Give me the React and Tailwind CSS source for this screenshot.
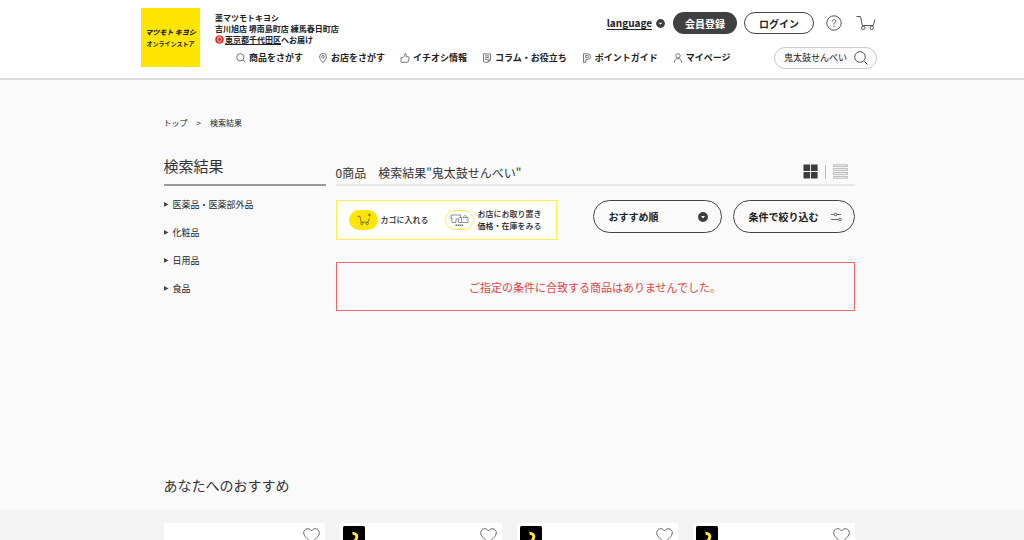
import React from "react";

const navItems = [
  { label: "商品をさがす", icon: "search" },
  { label: "お店をさがす", icon: "pin" },
  { label: "イチオシ情報", icon: "thumb" },
  { label: "コラム・お役立ち", icon: "note" },
  { label: "ポイントガイド", icon: "point" },
  { label: "マイページ", icon: "user" },
];

const categories = ["医薬品・医薬部外品", "化粧品", "日用品", "食品"];

const recommendations = [
  { id: 1, badge: false },
  { id: 2, badge: true },
  { id: 3, badge: true },
  { id: 4, badge: true },
];

const navShapes = {
  search: (
    <>
      <circle cx="4.3" cy="4.3" r="3.6" />
      <path d="M7 7l2.4 2.4" />
    </>
  ),
  pin: (
    <>
      <path d="M5 9.6C3.2 7.3 1.6 5.6 1.6 3.8a3.4 3.4 0 0 1 6.8 0C8.4 5.6 6.8 7.3 5 9.6z" />
      <circle cx="5" cy="3.8" r="1.3" />
    </>
  ),
  thumb: (
    <path d="M1 4.600h1.900L4.700 2.400 4.900.7c1.300-.2 1.700.9 1.100 3.100h2.300c.8 0 .9.700.7 1.400L8.200 8.400c-.2.600-.6.900-1.200.9H1.800c-.5 0-.8-.3-.8-.8z" />
  ),
  note: (
    <>
      <path d="M1.500.9h7v5.900L6.200 9.200H2.600c-.7 0-1.100-.4-1.100-1.100z" />
      <path d="M3 2.900h4M3 4.700h4M3 6.500h2.400M6.200 9.200V6.800h2.300" />
    </>
  ),
  point: (
    <>
      <path d="M1.500 9.300V.8h4.300a2.700 2.700 0 0 1 0 5.500H3.800v3z" />
      <path d="M3.700 2.500h2a1 1 0 0 1 0 2h-2z" />
    </>
  ),
  user: (
    <>
      <circle cx="5" cy="2.900" r="2.200" />
      <path d="M1.400 9.600c0-2.600 1.400-4.100 3.600-4.100s3.600 1.500 3.600 4.100" />
    </>
  ),
};

function NavIcon({ name }) {
  return (
    <svg viewBox="0 0 10 10" className="size-[10px] shrink-0" fill="none" stroke="#555" strokeWidth="0.8" aria-hidden="true">
      {navShapes[name]}
    </svg>
  );
}

function CartIcon({ className, plus = false }) {
  return (
    <svg viewBox="0 0 20 16" className={className} fill="none" stroke="currentColor" strokeWidth="1" aria-hidden="true">
      <path d="M.5 1.500h4l1.800 9h11L18.900 4.500" />
      <circle cx="7.300" cy="12.800" r="1.700" />
      <circle cx="15.800" cy="12.800" r="1.700" />
      {plus && <path d="M19-3v5M16.500-.5h5" />}
    </svg>
  );
}

function DownDot({ className }) {
  return (
    <svg viewBox="0 0 10 10" className={className} aria-hidden="true">
      <circle cx="5" cy="5" r="4.900" fill="#3c3c3c" />
      <path d="M3 4.100h4L5 6.500z" fill="#fff" />
    </svg>
  );
}

function Header() {
  return (
    <header className="border-b-2 border-[#dcdcdc] bg-white pr-[6px]">
      <div className="mx-auto flex max-w-[736px] items-start pt-2 pb-[9px]">
        <a href="#top" className="flex size-[59px] shrink-0 flex-col items-center justify-center gap-[3px] bg-[#ffe600] font-black text-[#222]">
          <span className="text-[7px] leading-[9px] whitespace-nowrap italic">マツモト キヨシ</span>
          <span className="text-[6px] leading-[8px] font-bold whitespace-nowrap">オンラインストア</span>
        </a>
        <div className="ml-[15px] flex min-w-0 flex-1 flex-col">
          <div className="flex h-[39px] items-start justify-between">
            <div className="pt-[4px] text-[8px] leading-[11px] font-bold whitespace-nowrap">
              <p>薬マツモトキヨシ</p>
              <p>吉川旭店 堺南島町店 練馬春日町店</p>
              <p className="flex items-center">
                <svg viewBox="0 0 9 9" className="mr-px size-[9px]" aria-hidden="true">
                  <circle cx="4.500" cy="4.500" r="4.300" fill="#d7322d" />
                  <path d="M4.500 7.400C3.200 5.900 2.500 5 2.500 3.900a2 2 0 0 1 4 0c0 1.100-.7 2-2 3.500z" fill="none" stroke="#fff" strokeWidth=".8" />
                </svg>
                <a href="#area" className="underline">東京都千代田区</a>へお届け
              </p>
            </div>
            <div className="flex items-center pt-[4px] font-bold">
              <button type="button" className="mr-2 flex items-center gap-1 text-[10px] leading-4">
                <span className="underline underline-offset-2">language</span>
                <DownDot className="size-[9px]" />
              </button>
              <a href="#register" className="mr-[7px] flex h-[22px] w-16 items-center justify-center rounded-full bg-[#404040] text-[10px] text-white">会員登録</a>
              <a href="#login" className="mr-3 flex h-[22px] w-[70px] items-center justify-center rounded-full border border-[#444] text-[10px]">ログイン</a>
              <a href="#help" aria-label="ヘルプ" className="mr-[14px]">
                <svg viewBox="0 0 16 16" className="size-4" fill="none" stroke="#555" aria-hidden="true">
                  <circle cx="8" cy="8" r="7.200" />
                  <path d="M6.300 6.500c0-2.500 3.500-2.500 3.500-.3C9.800 7.600 8 7.600 8 9.600M8 10.800v1.200" />
                </svg>
              </a>
              <a href="#cart" aria-label="カート" className="mr-px">
                <CartIcon className="h-4 w-5 text-[#555]" />
              </a>
            </div>
          </div>
          <div className="flex h-[22px] items-center justify-between pl-[21px]">
            <nav className="flex gap-[15px]">
              {navItems.map((item) => (
                <a key={item.label} href="#nav" className="flex items-center gap-[3px] text-[9px] leading-4 font-bold whitespace-nowrap">
                  <NavIcon name={item.icon} />
                  {item.label}
                </a>
              ))}
            </nav>
            <form className="flex h-[22px] w-[103px] items-center rounded-full border border-[#ccc] bg-[#fafafa] pr-2 pl-[9px]" onSubmit={(e) => e.preventDefault()}>
              <input type="text" aria-label="キーワード検索" defaultValue="鬼太鼓せんべい" className="min-w-0 flex-1 bg-transparent text-[9px] leading-4 outline-none" />
              <button type="submit" aria-label="検索">
                <svg viewBox="0 0 14 14" className="size-[14px]" fill="none" stroke="#555" aria-hidden="true">
                  <circle cx="6" cy="6" r="5.300" />
                  <path d="M9.800 9.800l3.700 3.700" />
                </svg>
              </button>
            </form>
          </div>
        </div>
      </div>
    </header>
  );
}

function Sidebar() {
  return (
    <aside className="w-[162px] shrink-0">
      <h1 className="flex h-[35px] items-center border-b-2 border-[#999] pb-[2px] text-[15px] text-[#333]">検索結果</h1>
      <ul className="flex flex-col gap-3 pt-[11px]">
        {categories.map((name) => (
          <li key={name}>
            <a href="#category" className="flex items-center gap-1 text-[9px] leading-4">
              <svg viewBox="0 0 5 7" className="h-[7px] w-[5px]" aria-hidden="true">
                <path d="M0 0l4.600 2.400L0 4.800z" fill="#444" />
              </svg>
              {name}
            </a>
          </li>
        ))}
      </ul>
    </aside>
  );
}

function Legend() {
  return (
    <div className="flex h-10 w-[221px] items-center border border-[#ffee50] bg-white pl-3 text-[8px] leading-3 font-medium whitespace-nowrap">
      <span className="mr-[3px] flex h-5 w-[29px] items-center justify-center rounded-full bg-[#ffe600]">
        <CartIcon plus className="h-[11px] w-[13px] overflow-visible text-[#444]" />
      </span>
      <span>カゴに入れる</span>
      <span className="mr-1 ml-4 flex h-5 w-[29px] items-center justify-center rounded-full border border-[#ffe94a]">
        <svg viewBox="0 0 19 13" className="h-[13px] w-[19px]" fill="none" stroke="#666" strokeWidth=".7" aria-hidden="true">
          <path d="M1 1h9.500v2.500M1 1v3h1v4.500h4V5h2.500v3.500h3M1 4h1" />
          <path d="M8.500 4.500l1-1h2v5H18v-5h-5.500M13.500 3.500c0-2.600 3-2.600 3 0M13 5.500h.6M16.400 5.500h.6" />
          <path d="M5.500 11.300h8" strokeWidth="1.600" strokeDasharray="1.500 .5" />
        </svg>
      </span>
      <span>
        お店にお取り置き
        <br />
        価格・在庫をみる
      </span>
    </div>
  );
}

function Results() {
  return (
    <section className="min-w-0 flex-1">
      <div className="flex h-[35px] items-center justify-between border-b-2 border-[#e8e8e8] pr-[7px]">
        <h2 className="pt-[10px] text-[12px] leading-5 whitespace-nowrap text-[#333]">0商品　検索結果"鬼太鼓せんべい"</h2>
        <div className="flex items-center gap-[7px] pt-2">
          <button type="button" aria-label="グリッド表示">
            <svg viewBox="0 0 15 15" className="size-[15px]" fill="#3c3c3c" aria-hidden="true">
              <path d="M.5.5h6.600v6.600H.5zM8 .5h6.600v6.600H8zM.5 8h6.600v6.600H.5zM8 8h6.600v6.600H8z" />
            </svg>
          </button>
          <span className="h-[14px] w-px bg-[#bbb]" />
          <button type="button" aria-label="リスト表示">
            <svg viewBox="0 0 15 15" className="size-[15px]" fill="none" stroke="#aaa" strokeWidth=".8" aria-hidden="true">
              <path d="M.5.8h14v1.800H.5zM.5 4.600h14v1.800H.5zM.5 8.500h14v1.800H.5zM.5 12.400h14v1.800H.5z" />
            </svg>
          </button>
        </div>
      </div>
      <div className="flex items-start justify-between pt-[14px]">
        <Legend />
        <div className="flex gap-[11px] text-[10px] font-bold">
          <button type="button" className="flex h-[33px] w-[129px] items-center justify-between rounded-full border border-[#444] pr-[13px] pl-[15px]">
            おすすめ順
            <DownDot className="size-[10px]" />
          </button>
          <button type="button" className="flex h-[33px] w-[122px] items-center justify-between rounded-full border border-[#444] pr-3 pl-[15px]">
            条件で絞り込む
            <svg viewBox="0 0 11 10" className="h-[10px] w-[11px]" fill="none" stroke="#555" strokeWidth=".9" aria-hidden="true">
              <path d="M0 2.500h3M6 2.500h4M0 7.500h7.500" />
              <circle cx="4.500" cy="2.500" r="1.300" />
              <circle cx="9" cy="7.500" r="1.300" />
            </svg>
          </button>
        </div>
      </div>
      <p className="mt-[22px] border border-[#e66a6a] pt-4 pb-[15px] text-center text-[11px] leading-4 text-[#e04545]">
        ご指定の条件に合致する商品はありませんでした。
      </p>
    </section>
  );
}

function Card({ badge }) {
  return (
    <li className="flex items-start justify-between bg-white px-[3px] pt-[3px]">
      {badge ? (
        <svg viewBox="0 0 22 22" className="size-[22px]" aria-hidden="true">
          <rect width="22" height="22" rx="1.500" fill="#000" />
          <path d="M9.500 7.500c4-.7 5.500 3 3.500 6-1 1.500-3 2.200-5 1.800" fill="none" stroke="#ffe93b" strokeWidth="3" />
        </svg>
      ) : (
        <span />
      )}
      <button type="button" aria-label="お気に入りに追加" className="pt-[2px] pr-[2px]">
        <svg viewBox="0 0 17 15" className="h-[15px] w-[17px]" fill="none" stroke="#666" aria-hidden="true">
          <path d="M8.500 14.300C4.500 11 .7 8.200.7 4.700.7.400 6.300-.8 8.500 3c2.200-3.800 7.800-2.600 7.800 1.700 0 3.500-3.800 6.300-7.800 9.600z" />
        </svg>
      </button>
    </li>
  );
}

export default function App() {
  return (
    <div lang="ja" className="min-h-screen bg-[#fafafa] font-['Noto_Sans_CJK_JP','Noto_Sans',sans-serif] text-[#222]">
      <Header />
      <main className="pr-[6px]">
        <div className="mx-auto max-w-[691px] pt-[35px]">
          <nav aria-label="パンくず" className="flex gap-[9px] text-[8px] leading-4">
            <a href="#top">トップ</a>
            <span>&gt;</span>
            <span>検索結果</span>
          </nav>
          <div className="flex min-h-[342px] gap-[10px] pt-5">
            <Sidebar />
            <Results />
          </div>
          <h2 className="pt-[2px] pb-[15px] text-[14px] leading-5 text-[#333]">あなたへのおすすめ</h2>
        </div>
      </main>
      <section className="bg-[#f3f3f3] pt-[13px] pr-[6px]">
        <ul className="mx-auto grid max-w-[691px] grid-cols-4 gap-[15px]">
          {recommendations.map((item) => (
            <Card key={item.id} badge={item.badge} />
          ))}
        </ul>
      </section>
    </div>
  );
}
